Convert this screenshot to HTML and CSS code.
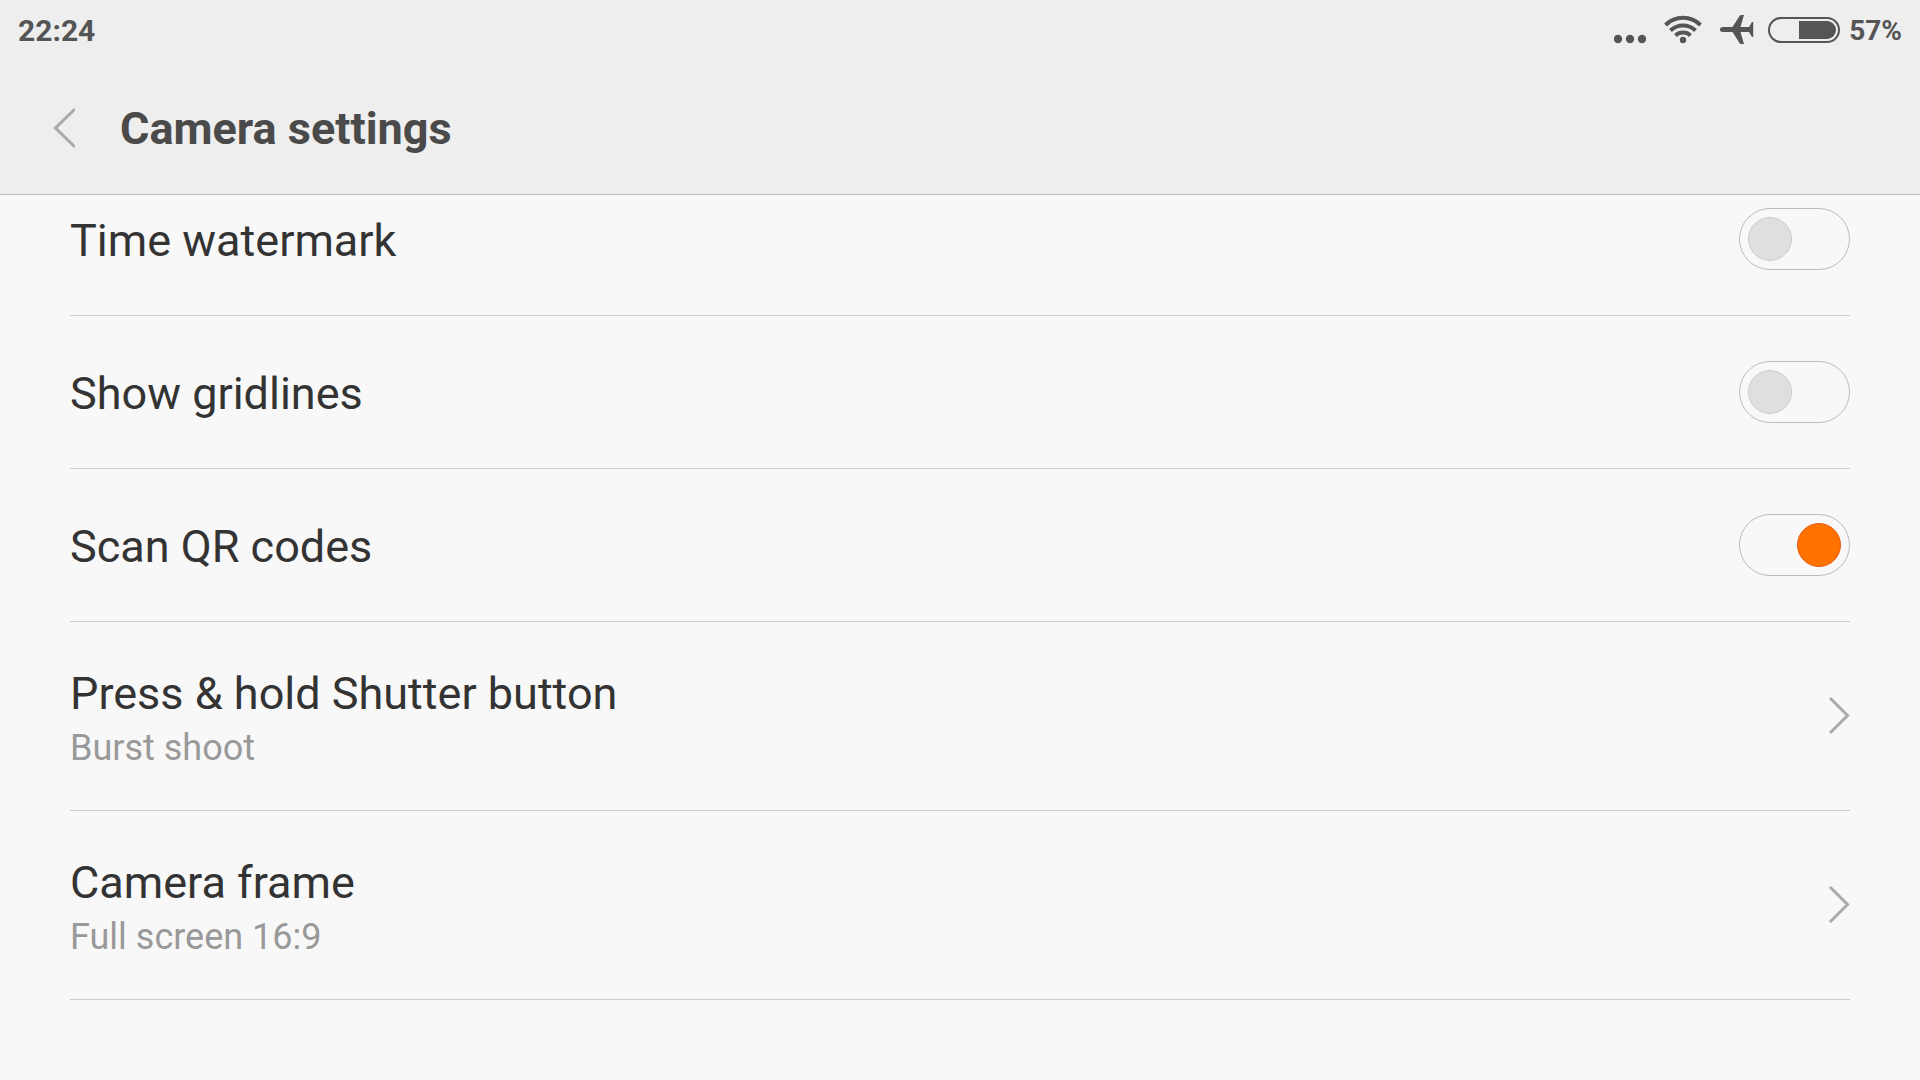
FILE: index.html
```html
<!DOCTYPE html>
<html lang="en">
<head>
<meta charset="utf-8">
<meta name="viewport" content="width=device-width, initial-scale=1">
<title>Camera settings</title>
<link rel="stylesheet" href="styles.css">
</head>
<body>
<header class="top">
  <div class="status">
    <time class="clock">22:24</time>
    <div class="indicators">
      <svg class="icon" width="32" height="44" viewBox="0 0 32 44" aria-hidden="true"><g fill="#555"><circle cx="4" cy="31" r="4.200"/><circle cx="16" cy="31" r="4.200"/><circle cx="28" cy="31" r="4.200"/></g></svg>
      <svg class="icon wifi" width="40" height="44" viewBox="0 0 40 44" aria-label="Wi-Fi"><g fill="none" stroke="#555" stroke-width="4"><path d="M2.500 17A25 25 0 0 1 37.500 17"/><path d="M7.500 22.500A18 18 0 0 1 32.500 22.500"/><path d="M12.500 27.500A11 11 0 0 1 27.500 27.500"/></g><circle cx="20" cy="32" r="3.200" fill="#555"/></svg>
      <svg class="icon plane" width="34" height="44" viewBox="0 0 34 44" aria-label="Airplane mode"><path fill="#555" d="M0 21.500Q0 19 3 19H12.500L19.500 8Q20.200 7 21.500 7H24L20.500 19H29L32 14H33.200V29H32L29 24H20.500L24 36H21.500Q20.200 36 19.500 35L12.500 24H3Q0 24 0 21.500Z"/></svg>
      <svg class="icon battery" width="72" height="44" viewBox="0 0 72 44" aria-label="Battery"><rect x="1" y="10" width="70" height="24" rx="12" fill="none" stroke="#555" stroke-width="2"/><path fill="#555" d="M31 13H59A9 9 0 0 1 59 31H31Z"/></svg>
      <span class="percent">57%</span>
    </div>
  </div>
  <div class="bar">
    <button class="back" type="button" aria-label="Back"><svg width="22" height="40" viewBox="0 0 22 40" aria-hidden="true"><path d="M22 1L2.500 20L22 39" fill="none" stroke="#aaa" stroke-width="3"/></svg></button>
    <h1 class="title">Camera settings</h1>
  </div>
</header>
<main class="screen">
  <ul class="list">
    <li class="item"><label class="row"><span class="name">Time watermark</span><input class="switch" type="checkbox"></label></li>
    <li class="item"><label class="row"><span class="name">Show gridlines</span><input class="switch" type="checkbox"></label></li>
    <li class="item"><label class="row"><span class="name">Scan QR codes</span><input class="switch" type="checkbox" checked></label></li>
    <li class="item"><button class="row row-nav" type="button"><span class="texts"><span class="name">Press &amp; hold Shutter button</span><span class="value">Burst shoot</span></span><svg width="22" height="40" viewBox="0 0 22 40" aria-hidden="true"><path d="M2 2L19.500 19.500L2 37" fill="none" stroke="#aaa" stroke-width="3"/></svg></button></li>
    <li class="item"><button class="row row-nav" type="button"><span class="texts"><span class="name">Camera frame</span><span class="value">Full screen 16:9</span></span><svg width="22" height="40" viewBox="0 0 22 40" aria-hidden="true"><path d="M2 2L19.500 19.500L2 37" fill="none" stroke="#aaa" stroke-width="3"/></svg></button></li>
  </ul>
</main>
</body>
</html>
```
FILE: styles.css
```css
*,
*::before {
  box-sizing: border-box;
}

body {
  margin: 0;
  background: #f8f8f8;
  color: #333;
  font-family: Roboto, "Liberation Sans", sans-serif;
}

button {
  border: 0;
  padding: 0;
  background: none;
  color: inherit;
  font-family: inherit;
  text-align: left;
}

svg {
  display: block;
  flex: none;
}

.top {
  background: #eee;
  border-bottom: 1px solid #bbb;
}

.status {
  display: flex;
  justify-content: space-between;
  align-items: center;
  height: 60px;
  padding: 0 18px;
  color: #555;
  font-weight: 700;
}

.clock {
  font-size: 30px;
}

.indicators {
  display: flex;
  align-items: center;
}

.wifi {
  margin-left: 17px;
}

.plane {
  margin-left: 17px;
}

.battery {
  margin-left: 14px;
}

.percent {
  margin-left: 9px;
  font-size: 28px;
}

.bar {
  display: flex;
  align-items: center;
  gap: 45px;
  padding: 2px 53px 0;
}

.title {
  margin: 0;
  padding-top: 2px;
  color: #4a4a4a;
  font-size: 45px;
  line-height: 130px;
}

.screen {
  overflow: hidden;
}

/* The list is scrolled, so its first row starts under the header. */
.list {
  margin: -32px 70px 0;
  padding: 0;
  list-style: none;
}

.item {
  border-bottom: 1px solid #ccc;
}

.row {
  display: flex;
  justify-content: space-between;
  align-items: center;
  width: 100%;
  min-height: 152px;
}

.row-nav {
  min-height: 188px;
}

.name {
  padding-top: 4px;
  font-size: 45px;
  line-height: 54px;
}

.texts {
  display: flex;
  flex-direction: column;
  padding-top: 6px;
}

.value {
  color: #999;
  font-size: 36px;
  line-height: 54px;
}

.switch {
  appearance: none;
  display: flex;
  align-items: center;
  width: 111px;
  height: 62px;
  margin: 0;
  padding: 0 8px;
  border: 1px solid #bbb;
  border-radius: 31px;
}

.switch::before {
  content: "";
  width: 44px;
  height: 44px;
  border: 1px solid #ccc;
  border-radius: 50%;
  background: #dfdfdf;
}

.switch:checked {
  justify-content: flex-end;
}

.switch:checked::before {
  border-color: #e85a10;
  background: #ff7200;
}
```
